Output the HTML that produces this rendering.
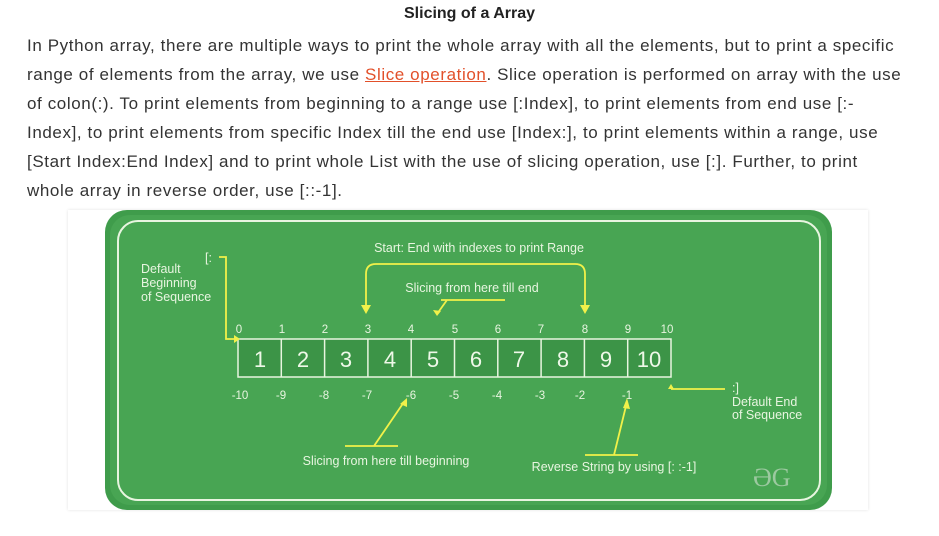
<!DOCTYPE html>
<html><head><meta charset="utf-8"><style>
body{margin:0;background:#fff;width:939px;height:536px;overflow:hidden;font-family:"Liberation Sans",sans-serif;color:#333}
.t{position:absolute;left:0;width:939px;text-align:center;top:5px;font-weight:bold;font-size:16px;color:#222}
.l{position:absolute;left:27px;font-size:17px;letter-spacing:0.6px;white-space:nowrap;line-height:20px}
a{color:#e2502a;text-decoration:underline}
.card{position:absolute;left:68px;top:210px;width:800px;height:300px;box-shadow:0 0 3px rgba(0,0,0,.12)}
svg{position:absolute;left:0;top:0}
</style></head><body>
<div class="t">Slicing of a Array</div>
<div class="l" style="top:36px">In Python array, there are multiple ways to print the whole array with all the elements, but to print a specific</div>
<div class="l" style="top:65px">range of elements from the array, we use <a>Slice operation</a>. Slice operation is performed on array with the use</div>
<div class="l" style="top:94px">of colon(:). To print elements from beginning to a range use [:Index], to print elements from end use [:-</div>
<div class="l" style="top:123px">Index], to print elements from specific Index till the end use [Index:], to print elements within a range, use</div>
<div class="l" style="top:152px">[Start Index:End Index] and to print whole List with the use of slicing operation, use [:]. Further, to print</div>
<div class="l" style="top:181px">whole array in reverse order, use [::-1].</div>
<div class="card"></div>
<svg width="939" height="536" font-family="Liberation Sans,sans-serif">
<rect x="105" y="210" width="727" height="300" rx="22" fill="#3f9c4b"/>
<rect x="110" y="215" width="717" height="290" rx="20" fill="#48a553"/>
<rect x="118" y="221" width="702" height="279" rx="20" fill="none" stroke="#e8f5e0" stroke-width="2"/>
<rect x="238" y="339" width="433" height="38" fill="#3c9447" stroke="#e8f5e0" stroke-width="1.5"/>
<g stroke="#e8f5e0" stroke-width="1.5">
<line x1="281.3" y1="339" x2="281.3" y2="377"/><line x1="324.6" y1="339" x2="324.6" y2="377"/><line x1="367.9" y1="339" x2="367.9" y2="377"/><line x1="411.2" y1="339" x2="411.2" y2="377"/><line x1="454.5" y1="339" x2="454.5" y2="377"/><line x1="497.8" y1="339" x2="497.8" y2="377"/><line x1="541.1" y1="339" x2="541.1" y2="377"/><line x1="584.4" y1="339" x2="584.4" y2="377"/><line x1="627.7" y1="339" x2="627.7" y2="377"/>
</g>
<g fill="#eef8e8" font-size="22" text-anchor="middle">
<text x="260" y="367">1</text><text x="303" y="367">2</text><text x="346" y="367">3</text><text x="390" y="367">4</text><text x="433" y="367">5</text><text x="476" y="367">6</text><text x="519" y="367">7</text><text x="563" y="367">8</text><text x="606" y="367">9</text><text x="649" y="367">10</text>
</g>
<g fill="#e8f5e0" font-size="11.5" text-anchor="middle">
<text x="239" y="333">0</text><text x="282" y="333">1</text><text x="325" y="333">2</text><text x="368" y="333">3</text><text x="411" y="333">4</text><text x="455" y="333">5</text><text x="498" y="333">6</text><text x="541" y="333">7</text><text x="585" y="333">8</text><text x="628" y="333">9</text><text x="667" y="333">10</text>
<text x="240" y="399">-10</text><text x="281" y="399">-9</text><text x="324" y="399">-8</text><text x="367" y="399">-7</text><text x="411" y="399">-6</text><text x="454" y="399">-5</text><text x="497" y="399">-4</text><text x="540" y="399">-3</text><text x="580" y="399">-2</text><text x="627" y="399">-1</text>
<text x="479" y="252" font-size="12.5">Start: End with indexes to print Range</text>
<text x="472" y="292" font-size="12.5">Slicing from here till end</text>
<text x="386" y="465" font-size="12.5">Slicing from here till beginning</text>
<text x="614" y="471" font-size="12.5">Reverse String by using [: :-1]</text>
</g>
<g fill="#e8f5e0" font-size="12.5">
<text x="141" y="273">Default</text><text x="141" y="287">Beginning</text><text x="141" y="301">of Sequence</text>
<text x="205" y="262">[:</text>
<text x="732" y="392">:]</text><text x="732" y="406">Default End</text><text x="732" y="419">of Sequence</text>
</g>
<g stroke="#f1f14a" stroke-width="1.8" fill="none">
<path d="M219 257H226V339H234"/>
<path d="M366 305V274Q366 264 376 264H575Q585 264 585 274V305"/>
<path d="M441 300H505M447 300L437 314"/>
<path d="M345 446H398M374 446L404 402"/>
<path d="M585 455H638M614 455L626 406"/>
<path d="M671 389H725"/>
</g>
<g fill="#f1f14a">
<path d="M361 305H371L366 314Z"/><path d="M580 305H590L585 314Z"/><path d="M234 335V343L240 339Z"/>
<path d="M433 310L437 316L441 311Z"/><path d="M400 404L407 398L407 407Z"/><path d="M623 408L627 398L630 409Z"/><path d="M668 389L671 384L674 389Z"/>
</g>
<text x="753" y="486" font-size="26" fill="#9cc9a0" font-family="Liberation Serif,serif">ƏG</text>
</svg>
</body></html>
